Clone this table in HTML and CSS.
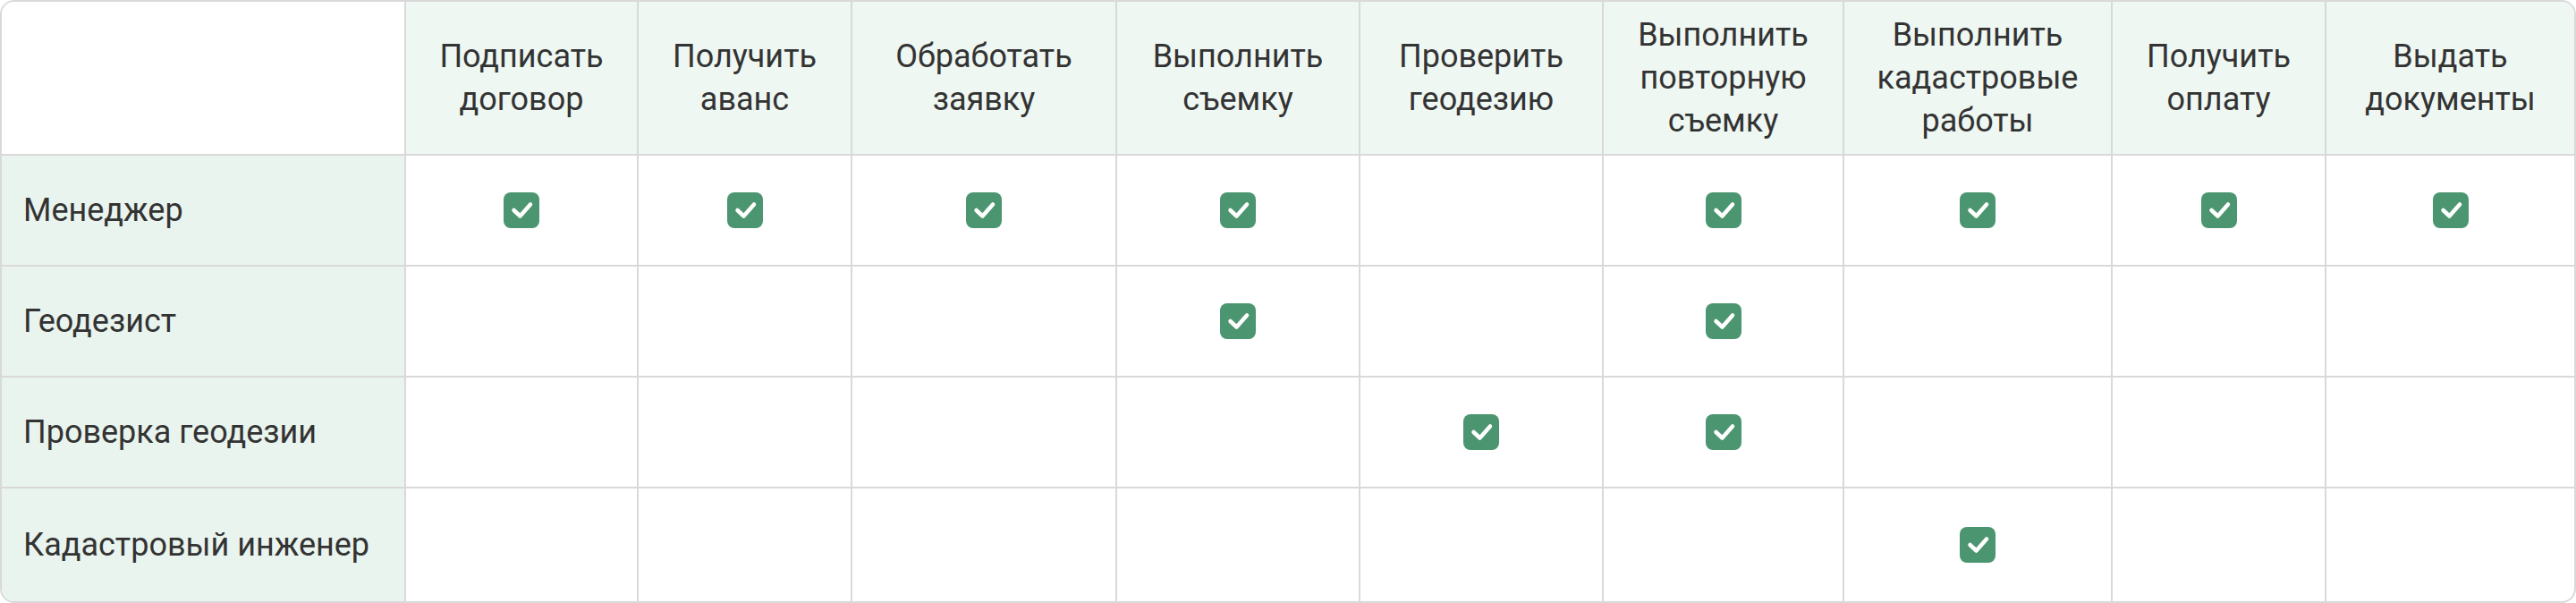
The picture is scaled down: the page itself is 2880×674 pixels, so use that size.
FILE: index.html
```html
<!DOCTYPE html>
<html lang="ru">
<head>
<meta charset="utf-8">
<title>Роли и этапы</title>
<link rel="stylesheet" href="styles.css">
</head>
<body>
<div class="matrix">
  <table class="grid">
    <colgroup>
      <col class="c0"><col class="c1"><col class="c2"><col class="c3"><col class="c4">
      <col class="c5"><col class="c6"><col class="c7"><col class="c8"><col class="c9">
    </colgroup>
    <thead>
      <tr>
        <th class="corner"></th>
        <th>Подписать<br>договор</th>
        <th>Получить<br>аванс</th>
        <th>Обработать<br>заявку</th>
        <th>Выполнить<br>съемку</th>
        <th>Проверить<br>геодезию</th>
        <th>Выполнить<br>повторную<br>съемку</th>
        <th>Выполнить<br>кадастровые<br>работы</th>
        <th>Получить<br>оплату</th>
        <th>Выдать<br>документы</th>
      </tr>
    </thead>
    <tbody>
      <tr>
        <th class="role">Менеджер</th>
        <td><span class="check"><svg viewBox="0 0 40 40"><path d="M11.5 20 L18.5 26.5 L30 13.5"/></svg></span></td>
        <td><span class="check"><svg viewBox="0 0 40 40"><path d="M11.5 20 L18.5 26.5 L30 13.5"/></svg></span></td>
        <td><span class="check"><svg viewBox="0 0 40 40"><path d="M11.5 20 L18.5 26.5 L30 13.5"/></svg></span></td>
        <td><span class="check"><svg viewBox="0 0 40 40"><path d="M11.5 20 L18.5 26.5 L30 13.5"/></svg></span></td>
        <td></td>
        <td><span class="check"><svg viewBox="0 0 40 40"><path d="M11.5 20 L18.5 26.5 L30 13.5"/></svg></span></td>
        <td><span class="check"><svg viewBox="0 0 40 40"><path d="M11.5 20 L18.5 26.5 L30 13.5"/></svg></span></td>
        <td><span class="check"><svg viewBox="0 0 40 40"><path d="M11.5 20 L18.5 26.5 L30 13.5"/></svg></span></td>
        <td><span class="check"><svg viewBox="0 0 40 40"><path d="M11.5 20 L18.5 26.5 L30 13.5"/></svg></span></td>
      </tr>
      <tr>
        <th class="role">Геодезист</th>
        <td></td>
        <td></td>
        <td></td>
        <td><span class="check"><svg viewBox="0 0 40 40"><path d="M11.5 20 L18.5 26.5 L30 13.5"/></svg></span></td>
        <td></td>
        <td><span class="check"><svg viewBox="0 0 40 40"><path d="M11.5 20 L18.5 26.5 L30 13.5"/></svg></span></td>
        <td></td>
        <td></td>
        <td></td>
      </tr>
      <tr>
        <th class="role">Проверка геодезии</th>
        <td></td>
        <td></td>
        <td></td>
        <td></td>
        <td><span class="check"><svg viewBox="0 0 40 40"><path d="M11.5 20 L18.5 26.5 L30 13.5"/></svg></span></td>
        <td><span class="check"><svg viewBox="0 0 40 40"><path d="M11.5 20 L18.5 26.5 L30 13.5"/></svg></span></td>
        <td></td>
        <td></td>
        <td></td>
      </tr>
      <tr class="last">
        <th class="role">Кадастровый инженер</th>
        <td></td>
        <td></td>
        <td></td>
        <td></td>
        <td></td>
        <td></td>
        <td><span class="check"><svg viewBox="0 0 40 40"><path d="M11.5 20 L18.5 26.5 L30 13.5"/></svg></span></td>
        <td></td>
        <td></td>
      </tr>
    </tbody>
  </table>
</div>
</body>
</html>
```

FILE: styles.css
```css
html, body {
  margin: 0;
  padding: 0;
  background: #ffffff;
}

body {
  font-family: Roboto, "Noto Sans", "Liberation Sans", sans-serif;
  color: #333333;
}

.matrix {
  width: 2880px;
  height: 674px;
  box-sizing: border-box;
  border: 2px solid #d9d9d9;
  border-radius: 16px;
  overflow: hidden;
  background: #ffffff;
}

.grid {
  width: 2876px;
  table-layout: fixed;
  border-collapse: separate;
  border-spacing: 0;
}

.c0 { width: 452px; }
.c1 { width: 260px; }
.c2 { width: 239px; }
.c3 { width: 296px; }
.c4 { width: 272px; }
.c5 { width: 272px; }
.c6 { width: 269px; }
.c7 { width: 300px; }
.c8 { width: 239px; }
.c9 { width: 277px; }

.grid th,
.grid td {
  box-sizing: border-box;
  border-right: 2px solid #d9d9d9;
  border-bottom: 2px solid #d9d9d9;
  padding: 0;
  vertical-align: middle;
}

.grid th:last-child,
.grid td:last-child {
  border-right: none;
}

.grid thead th {
  height: 172px;
  background: #eef7f2;
  font-weight: 400;
  font-size: 36px;
  line-height: 48px;
  text-align: center;
  color: #333333;
  padding: 0 8px;
}

.grid thead th.corner {
  background: #ffffff;
}

.grid tbody tr td,
.grid tbody tr th {
  height: 124px;
}

.grid tbody tr.last td,
.grid tbody tr.last th {
  height: 126px;
  border-bottom: none;
}

.grid th.role {
  background: #e9f4ee;
  font-weight: 400;
  font-size: 36px;
  line-height: 48px;
  text-align: left;
  padding-left: 24px;
  color: #333333;
}

.grid td {
  text-align: center;
}

.check {
  display: inline-flex;
  width: 40px;
  height: 40px;
  border-radius: 8px;
  background: #4b9670;
  vertical-align: middle;
}

.check svg {
  width: 40px;
  height: 40px;
  fill: none;
  stroke: #ffffff;
  stroke-width: 4.5;
  stroke-linecap: round;
  stroke-linejoin: round;
}
```
